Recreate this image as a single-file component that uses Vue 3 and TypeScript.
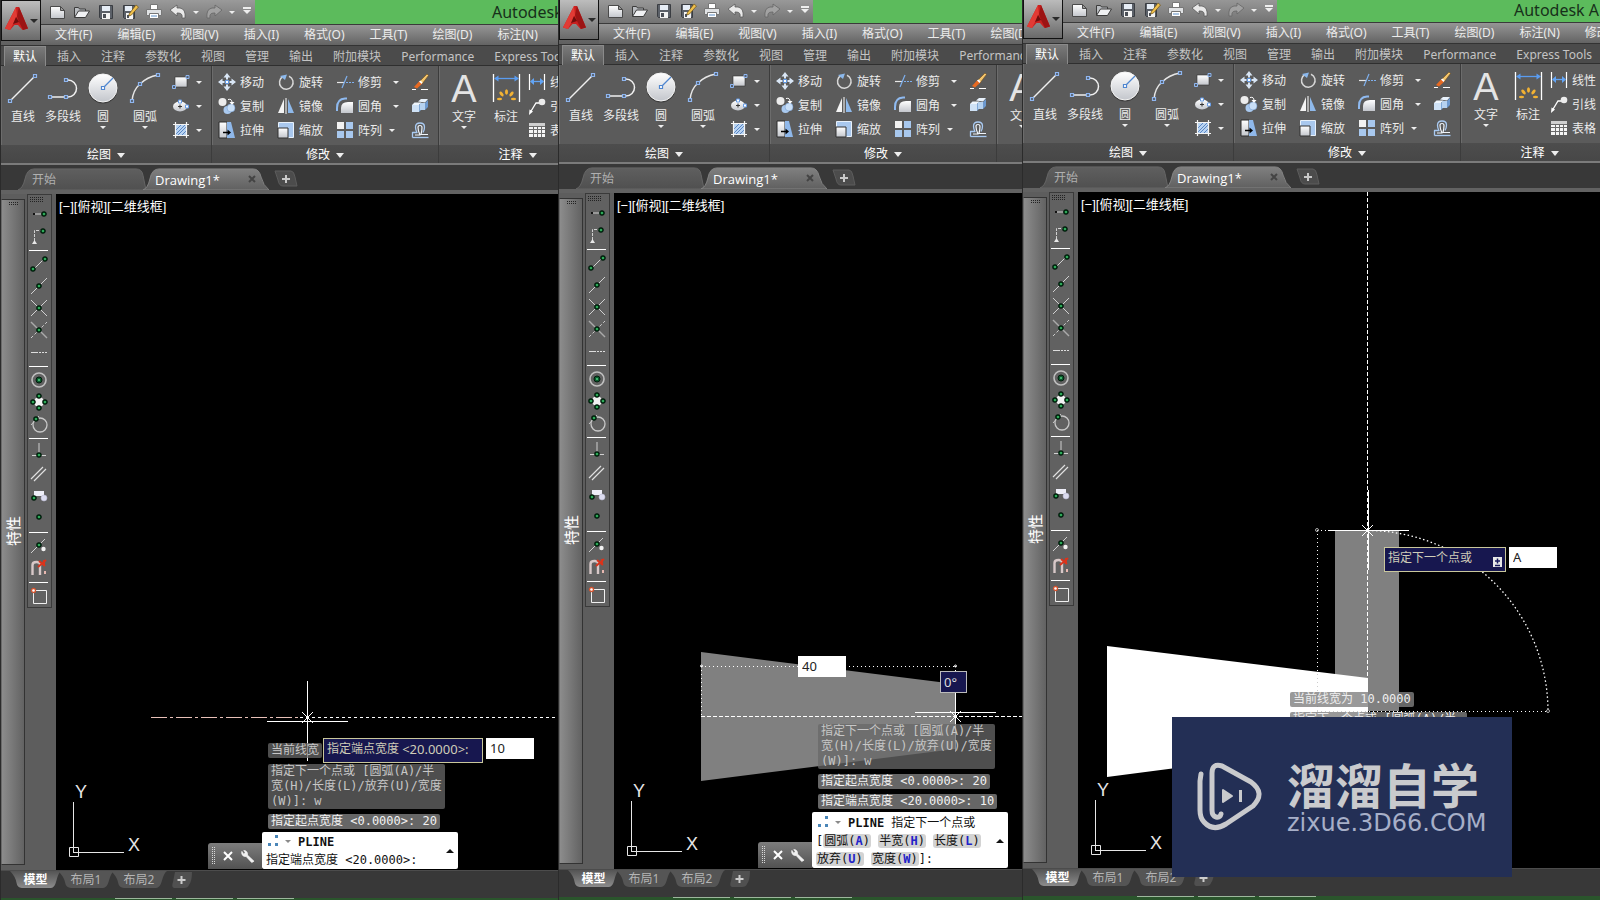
<script setup lang="ts">
interface Pane { id: string; grow: string }
interface BigTool { icon: string; label: string; caret: boolean; cls: string }
interface SmallTool { icon: string; label: string; caret: boolean }

const panes: Pane[] = [
  { id: 'one', grow: 'first' },
  { id: 'two', grow: 'second' },
  { id: 'three', grow: 'third' },
]

const quickIcons = ['new', 'open', 'save', 'saveas', 'print', 'undo']
const menus = ['文件(F)', '编辑(E)', '视图(V)', '插入(I)', '格式(O)', '工具(T)', '绘图(D)', '标注(N)', '修改']
const ribbonTabs = ['默认', '插入', '注释', '参数化', '视图', '管理', '输出', '附加模块', 'Performance', 'Express Tools']

const drawTools: BigTool[] = [
  { icon: 'line', label: '直线', caret: false, cls: '' },
  { icon: 'pline', label: '多段线', caret: false, cls: '' },
  { icon: 'circle', label: '圆', caret: true, cls: '' },
  { icon: 'arc', label: '圆弧', caret: true, cls: 'wide' },
]
const shapeTools: string[] = ['rect', 'ellipse', 'hatch']
const shapeNames: string[] = ['矩形', '椭圆', '图案填充']

const modifyTools: SmallTool[] = [
  { icon: 'move', label: '移动', caret: false },
  { icon: 'rotate', label: '旋转', caret: false },
  { icon: 'trim', label: '修剪', caret: true },
  { icon: 'erase', label: '', caret: false },
  { icon: 'copy', label: '复制', caret: false },
  { icon: 'mirror', label: '镜像', caret: false },
  { icon: 'fillet', label: '圆角', caret: true },
  { icon: 'explode', label: '', caret: false },
  { icon: 'stretch', label: '拉伸', caret: false },
  { icon: 'scale', label: '缩放', caret: false },
  { icon: 'array', label: '阵列', caret: true },
  { icon: 'offset', label: '', caret: false },
]
const noteTools: SmallTool[] = [
  { icon: 'linear', label: '线性', caret: false },
  { icon: 'leader', label: '引线', caret: false },
  { icon: 'table', label: '表格', caret: false },
]

const snapGroups: string[][] = [
  ['track', 'from'],
  ['end', 'mid', 'int', 'appint', 'ext'],
  ['cen', 'qua', 'tan'],
  ['per', 'par', 'ins', 'node'],
  ['near', 'none'],
  ['settings'],
]

const layoutTabs = ['模型', '布局1', '布局2']
const optionLines = '指定下一个点或 [圆弧(A)/半\n宽(H)/长度(L)/放弃(U)/宽度\n(W)]: w'
</script>

<template>
  <main class="desk">
    <svg class="defs" aria-hidden="true">
      <defs>
        <linearGradient id="gl" x1="0" y1="0" x2="0" y2="1"><stop offset="0" stop-color="#fff" /><stop offset="1" stop-color="#c3c6cc" /></linearGradient>
        <linearGradient id="gtab" x1="0" y1="0" x2="0" y2="1"><stop offset="0" stop-color="#808080" /><stop offset="1" stop-color="#606060" /></linearGradient>
        <linearGradient id="gtab2" x1="0" y1="0" x2="0" y2="1"><stop offset="0" stop-color="#5f5f5f" /><stop offset="1" stop-color="#505050" /></linearGradient>
        <linearGradient id="gbot" x1="0" y1="0" x2="0" y2="1"><stop offset="0" stop-color="#545454" /><stop offset="1" stop-color="#8c8c8c" /></linearGradient>
      </defs>

      <symbol id="i-app" viewBox="0 0 24 24">
        <path d="M12 1 1 22.500 6 24 10.500 19H14l4.500 5 5.500-1.500L15 1z" fill="#c9201f" />
        <path d="M12 1 1 22.500 6 24 13 10z" fill="#e23b35" />
        <path d="M15 1 13 10l2 6 4 8 5-1.500z" fill="#9c1414" />
        <path d="M9 18 12 11l3 5z" fill="#6f0d0d" />
      </symbol>
      <symbol id="i-new" viewBox="0 0 18 18"><path d="M1.500 3.500h10l4 4v8h-14z" fill="url(#gl)" stroke="#4a4a4a" /><path d="M11.500 3.500v4h4z" fill="#9a9a9a" stroke="#4a4a4a" /></symbol>
      <symbol id="i-open" viewBox="0 0 18 18"><path d="M1.500 14.500V4.500h4l1 1.500h6v2" fill="#b9bcc0" stroke="#3c3c3c" /><path d="M1.500 14.500 5.500 8h11l-4 6.500z" fill="#f0f1f3" stroke="#3c3c3c" /></symbol>
      <symbol id="i-save" viewBox="0 0 18 18"><path d="M2.500 2.500h13v13h-12l-1-1z" fill="#5b6068" stroke="#3a3d42" /><rect x="5" y="3" width="8" height="5" fill="#e6edf6" /><rect x="5" y="10" width="8" height="6" fill="#f4f4f4" /><rect x="6" y="11" width="3" height="4" fill="#4c5057" /></symbol>
      <symbol id="i-saveas" viewBox="0 0 18 18"><path d="M2.500 2.500h11v13h-10l-1-1z" fill="#5b6068" stroke="#3a3d42" /><rect x="4" y="3" width="7" height="5" fill="#e6edf6" /><rect x="5" y="10" width="7" height="6" fill="#f4f4f4" /><rect x="6" y="12" width="2" height="3" fill="#4c5057" /><path d="M8 11 15 2l2.500 2L10.500 12 8 13z" fill="#f0c04c" stroke="#6e5319" stroke-width=".7" /></symbol>
      <symbol id="i-print" viewBox="0 0 18 18"><path d="M5.500 7V1.500h7V7" fill="#fff" stroke="#777" /><path d="M1.500 6.500h15v6h-15z" fill="#e0e2e4" stroke="#777" /><path d="M4.500 10.500h9v5h-9z" fill="#fff" stroke="#777" /><path d="M6 13h6" stroke="#5a8cc4" /></symbol>
      <symbol id="i-undo" viewBox="0 0 18 18"><path d="M1 7 8 2v3h3q6 1 5 10h-3q1-5-4-5H8v3z" fill="#e9e9e9" stroke="#5a5a5a" stroke-width=".8" /></symbol>
      <symbol id="i-redo" viewBox="0 0 18 18"><path d="M17 7 10 2v3H7q-6 1-5 10h3q-1-5 4-5h1v3z" fill="#a2a2a2" stroke="#666" stroke-width=".8" /></symbol>

      <symbol id="i-line" viewBox="0 0 32 32"><path d="M3 29 28 4" stroke="#f0f0f0" stroke-width="1.500" /><g fill="#55606e" stroke="#8fb6f0" stroke-width="1.200"><path d="M1.500 27.500h3v3h-3zM26.500 2.500h3v3h-3z" /></g></symbol>
      <symbol id="i-pline" viewBox="0 0 32 32"><path d="M3 25h18a8.500 8.500 0 0 0 0-17h-2" fill="none" stroke="#f0f0f0" stroke-width="1.500" /><g fill="#55606e" stroke="#8fb6f0" stroke-width="1.200"><path d="M1.500 23.500h3v3h-3zM17.500 23.500h3v3h-3zM17.500 6.500h3v3h-3z" /></g></symbol>
      <symbol id="i-circle" viewBox="0 0 32 32"><circle cx="16" cy="17" r="14.500" fill="#3d3d3d" /><circle cx="16" cy="16" r="14" fill="url(#gl)" stroke="#f5f5f5" /><path d="M17 15 26 6" stroke="#4f86d0" stroke-width="1.300" /><path d="M14.500 14.500h3v3h-3z" fill="#fff" stroke="#4f86d0" stroke-width="1.200" /></symbol>
      <symbol id="i-arc" viewBox="0 0 32 32"><path d="M3 29Q4 18 11 12 18 5 29 3" fill="none" stroke="#e6e6e6" stroke-width="1.500" /><g fill="#55606e" stroke="#8fb6f0" stroke-width="1.200"><path d="M1.500 27.500h3v3h-3zM9.500 10.500h3v3h-3zM27.500 1.500h3v3h-3z" /></g></symbol>
      <symbol id="i-dim" viewBox="0 0 32 32"><path d="M3.500 2v28M29.500 2v28" stroke="#fff" stroke-width="1.300" /><path d="M6 6.500h21" stroke="#5a9cf0" stroke-width="1.300" /><path d="M4 6.500 8.500 3.500v6zM29 6.500 24.500 3.500v6z" fill="#5a9cf0" /><g fill="#f2b233"><ellipse cx="16.500" cy="20" rx="1.500" ry="2.800" /><ellipse cx="11.500" cy="22" rx="1.500" ry="2.800" transform="rotate(-40 11.500 22)" /><ellipse cx="21.500" cy="22" rx="1.500" ry="2.800" transform="rotate(40 21.500 22)" /><ellipse cx="9.500" cy="27" rx="2.600" ry="1.300" /><ellipse cx="23.500" cy="27" rx="2.600" ry="1.300" /></g></symbol>

      <symbol id="i-rect" viewBox="0 0 18 18"><rect x="3" y="4" width="12" height="10" fill="url(#gl)" stroke="#333" stroke-width=".6" /><g fill="#55606e" stroke="#8fb6f0"><path d="M.500 12.500h3v3h-3zM14 2.500h3v3h-3z" /></g></symbol>
      <symbol id="i-ellipse" viewBox="0 0 18 18"><ellipse cx="8" cy="9.500" rx="7" ry="5" fill="url(#gl)" /><path d="M8 7.500v4M6 9.500h4" stroke="#333" /><path d="M6.500 3h3v3h-3zM13.500 8h3v3h-3z" fill="#fff" stroke="#6a9ee6" /></symbol>
      <symbol id="i-hatch" viewBox="0 0 18 18"><rect x="4" y="4" width="10" height="10" fill="#b9d4f2" /><path d="M4 9 9 4M4 13 13 4M6 14 14 6M10 14l4-4" stroke="#5a86c4" /><path d="M1 3.500h16M3.500 1v16M14.500 1v16M1 14.500h16" stroke="#f4f4f4" stroke-width="1.200" /></symbol>
      <symbol id="i-move" viewBox="0 0 18 18"><g fill="#d9e6f5"><path d="M9 0 12.500 4.500H10v2H8v-2H5.500zM9 18l3.500-4.500H10v-2H8v2H5.500zM0 9 4.500 5.500V8h2v2h-2v2.500zM18 9l-4.500-3.500V8h-2v2h2v2.500z" /></g><path d="M7.500 7.500h3v3h-3z" fill="#fff" stroke="#5f98e4" /></symbol>
      <symbol id="i-rotate" viewBox="0 0 18 18"><path d="M6 3.500A6.800 6.800 0 1 0 12 3.200" fill="none" stroke="#d7d7d7" stroke-width="1.500" /><path d="M3 3 10 1.500 8 7z" fill="#8bb8ec" /></symbol>
      <symbol id="i-trim" viewBox="0 0 18 18"><path d="M1 9.500h7" stroke="#e8e8e8" stroke-width="1.200" /><path d="M10 9.500h8" stroke="#7fb0ee" stroke-width="1.200" stroke-dasharray="2 1" /><path d="M6 15 11 3" stroke="#7fb0ee" stroke-width="1.200" /></symbol>
      <symbol id="i-erase" viewBox="0 0 18 18"><path d="M1 16.500h4M10 16.500h7" stroke="#fff" /><path d="M9 8 16 1l1.500 1.500L11 11z" fill="#f3c56d" stroke="#704b18" stroke-width=".6" /><path d="M3 14 8.500 8l3 2.500L6 15.500z" fill="#e86a22" /><path d="M8 8.500l1.500-1 2 2-1 1.500z" fill="#fff" /></symbol>
      <symbol id="i-copy" viewBox="0 0 18 18"><circle cx="4.500" cy="5" r="4" fill="#ececec" /><circle cx="9.500" cy="13" r="4" fill="#a9c9ef" /><circle cx="13" cy="11" r="4" fill="#c9dff7" stroke="#6a94cc" stroke-width=".5" /><path d="M10 2.500q4-1 4 3" fill="none" stroke="#fff" /><path d="M11.500 5h5l-2.500 3z" fill="#fff" /></symbol>
      <symbol id="i-mirror" viewBox="0 0 18 18"><path d="M7 2v14H1z" fill="#f4f4f4" /><path d="M11 2v14h6z" fill="#8fb9ea" /><path d="M9 1v16" stroke="#fff" /></symbol>
      <symbol id="i-fillet" viewBox="0 0 18 18"><path d="M5 16V11q0-6 7-6h5v11z" fill="url(#gl)" /><path d="M1 14V11Q1 2 9 1.500h2" fill="none" stroke="#8fbaf0" stroke-width="2" /></symbol>
      <symbol id="i-explode" viewBox="0 0 18 18"><path d="M1 8h7v7H1z" fill="#cfe2f6" /><path d="M1 8 3.500 5.500h7L8 8z" fill="#eef5fc" /><path d="M8 8l2.500-2.500v7L8 15z" fill="#7fa8d8" /><path d="M9 6h5v7H9z" fill="#b6d2f0" /><path d="M7 4.500 10 2h7l-3 3.500z" fill="#e9f2fc" /><path d="M14 6 17 3v7l-3 3z" fill="#6d99cf" /></symbol>
      <symbol id="i-stretch" viewBox="0 0 18 18"><path d="M1 1h8v16H1z" fill="url(#gl)" stroke="#2d2d2d" /><path d="M9 1h4l4 16H9z" fill="#8fb8ea" /><path d="M5 11.500h6" stroke="#000" stroke-width="1.500" /><path d="M9.500 8.500 13 11.500l-3.500 3z" fill="#000" /></symbol>
      <symbol id="i-scale" viewBox="0 0 18 18"><path d="M1.500 1.500h15v15h-15z" fill="#a9c8ee" stroke="#e8f1fb" /><path d="M1 7h10v10H1z" fill="url(#gl)" stroke="#333" /></symbol>
      <symbol id="i-array" viewBox="0 0 18 18"><rect x="1" y="1" width="7" height="7" fill="#f2f2f2" /><rect x="10" y="1" width="7" height="7" fill="#a8c8ee" /><rect x="1" y="10" width="7" height="7" fill="#a8c8ee" /><rect x="10" y="10" width="7" height="7" fill="#a8c8ee" /></symbol>
      <symbol id="i-offset" viewBox="0 0 18 18"><g fill="none" stroke-linejoin="round"><path d="M1.500 16.500V11.500H6Q4.500 9 4.500 6q0-4 4.500-4t4.500 4q0 3-1.500 5.500" stroke="#a9caf2" stroke-width="1.300" /><path d="M1.500 16.500h16" stroke="#a9caf2" stroke-width="1.300" /><path d="M4 14H9Q7 10 7 6.500 7 4.500 9 4.500t2 2q0 3-1 7h7" stroke="#f0f5fb" stroke-width="1.200" /></g></symbol>
      <symbol id="i-linear" viewBox="0 0 18 18"><path d="M1.500 1v16M16.500 1v16" stroke="#fff" stroke-width="1.200" /><path d="M4 8.500h10" stroke="#62a4f4" stroke-width="1.300" /><path d="M2 8.500 6 5v7zM16 8.500 12 5v7z" fill="#62a4f4" /></symbol>
      <symbol id="i-leader" viewBox="0 0 18 18"><circle cx="14" cy="5" r="3.300" fill="#ececec" /><path d="M11 6H8L2.500 15" fill="none" stroke="#fff" stroke-width="1.300" /><path d="M1 18 1.500 12.500 5 14.500z" fill="#fff" /></symbol>
      <symbol id="i-table" viewBox="0 0 18 18"><rect x="1" y="2" width="16" height="14" fill="#f5f5f5" /><rect x="1" y="2" width="16" height="3" fill="#cfcfcf" /><path d="M1 8.500h16M1 12.500h16M5.500 5v11M9.500 5v11M13.500 5v11M1 5.500h16" stroke="#6c6c6c" /></symbol>

      <symbol id="pt" viewBox="0 0 6 6"><circle cx="3" cy="3" r="2.200" fill="#062" stroke="#021a0c" stroke-width="1.200" /><circle cx="3" cy="3" r="1" fill="#3fbf6c" /></symbol>
      <symbol id="s-track" viewBox="0 0 18 18"><path d="M5 9h6" stroke="#d0d0d0" /><rect x="3" y="8" width="2" height="2" fill="#111" /><use href="#pt" x="11" y="6" width="6" height="6" /></symbol>
      <symbol id="s-from" viewBox="0 0 18 18"><path d="M4.500 14V3.500H11" fill="none" stroke="#d0d0d0" stroke-dasharray="3 1" /><path d="M2 17h5l-2.500-4z" fill="#e8e8e8" /><use href="#pt" x="10" y="1" width="6" height="6" /></symbol>
      <symbol id="s-end" viewBox="0 0 18 18"><path d="M3 15 15 3" stroke="#d0d0d0" /><use href="#pt" x="0" y="11" width="6" height="6" /><use href="#pt" x="12" y="1" width="6" height="6" /></symbol>
      <symbol id="s-mid" viewBox="0 0 18 18"><path d="M1 17 17 1" stroke="#d0d0d0" /><use href="#pt" x="6" y="6" width="6" height="6" /></symbol>
      <symbol id="s-int" viewBox="0 0 18 18"><path d="M1 17 17 1M1 1l16 16" stroke="#d0d0d0" /><use href="#pt" x="6" y="6" width="6" height="6" /></symbol>
      <symbol id="s-appint" viewBox="0 0 18 18"><path d="M1 1l16 16" stroke="#aaa" stroke-width="1.500" /><path d="M1 17 17 1" stroke="#ccc" stroke-dasharray="3 2" /><use href="#pt" x="6" y="6" width="6" height="6" /></symbol>
      <symbol id="s-ext" viewBox="0 0 18 18"><path d="M1 9.500h7" stroke="#ddd" /><path d="M9 9.500h9" stroke="#ddd" stroke-dasharray="2 1" /></symbol>
      <symbol id="s-cen" viewBox="0 0 18 18"><circle cx="9" cy="9" r="7" fill="none" stroke="#c0c0c0" stroke-width="1.600" /><circle cx="9" cy="9" r="3" fill="#0a5a2c" stroke="#021a0c" /><circle cx="9" cy="9" r="1" fill="#4fd080" /></symbol>
      <symbol id="s-qua" viewBox="0 0 18 18"><circle cx="9" cy="9" r="5" fill="#f2f2f2" /><use href="#pt" x="6" y="0" width="6" height="6" /><use href="#pt" x="6" y="12" width="6" height="6" /><use href="#pt" x="0" y="6" width="6" height="6" /><use href="#pt" x="12" y="6" width="6" height="6" /></symbol>
      <symbol id="s-tan" viewBox="0 0 18 18"><circle cx="10" cy="10" r="7" fill="none" stroke="#c8c8c8" stroke-width="1.300" /><path d="M1 10 9 1" stroke="#c8c8c8" /><use href="#pt" x="3" y="1" width="6" height="6" /></symbol>
      <symbol id="s-per" viewBox="0 0 18 18"><path d="M9 0v12M2 12.500h14" stroke="#d0d0d0" /><use href="#pt" x="6" y="9" width="6" height="6" /></symbol>
      <symbol id="s-par" viewBox="0 0 18 18"><path d="M1 14 13 2M4 16 16 4" stroke="#e0e0e0" stroke-width="1.200" /></symbol>
      <symbol id="s-ins" viewBox="0 0 18 18"><path d="M4 4h10v5H4z" fill="#eeeef8" /><circle cx="14" cy="11" r="3" fill="#dcdcf0" stroke="#b8b8d0" stroke-width=".6" /><use href="#pt" x="1" y="8" width="6" height="6" /></symbol>
      <symbol id="s-node" viewBox="0 0 18 18"><use href="#pt" x="6" y="5" width="6" height="6" /></symbol>
      <symbol id="s-near" viewBox="0 0 18 18"><path d="M1 16 15 2" stroke="#d0d0d0" /><use href="#pt" x="6" y="5" width="6" height="6" /><circle cx="13.500" cy="12" r="2.200" fill="#f2f2f2" /></symbol>
      <symbol id="s-none" viewBox="0 0 18 18"><path d="M2.500 16V6q0-3 4-3t3.500 3v10" fill="none" stroke="#d8c8c8" stroke-width="2.400" /><path d="M9 2l6 5M16 1 8 8M14 1v6" stroke="#d8341c" stroke-width="2" /><rect x="14" y="12" width="2" height="3" fill="#e8b8b0" /></symbol>
      <symbol id="s-settings" viewBox="0 0 18 18"><path d="M3.500 4v12.500h13v-13H5" fill="none" stroke="#f0f0f0" /><circle cx="3.500" cy="3.500" r="2" fill="#fff" stroke="#d4512c" stroke-width="1.300" /></symbol>
      <symbol id="i-wrench" viewBox="0 0 16 16"><path d="M2 2.500A4 4 0 0 0 6.500 8L12.500 14.500 15 13 8 6.500A4 4 0 0 0 4 1.500L5.500 4 4 5.500z" fill="#f0f0f0" stroke="#fff" stroke-width=".6" /></symbol>
    </svg>

    <section v-for="p in panes" :key="p.id" class="win" :class="p.grow">
      <header class="head">
        <button class="app" aria-label="应用程序菜单"><svg width="24" height="26"><use href="#i-app" /></svg><i class="caret dark"></i></button>
        <div class="bars">
          <div class="title">
            <div class="quick">
              <button v-for="q in quickIcons" :key="q" class="q" :aria-label="q"><svg width="18" height="18"><use :href="'#i-' + q" /></svg></button>
              <i class="caret q-caret"></i>
              <button class="q" aria-label="redo"><svg width="18" height="18"><use href="#i-redo" /></svg></button>
              <i class="caret q-caret"></i>
              <i class="caret over"></i>
            </div>
            <span class="name">Autodesk A</span>
          </div>
          <nav class="menu"><button v-for="m in menus" :key="m">{{ m }}</button></nav>
        </div>
      </header>

      <nav class="rtabs">
        <button v-for="(t, i) in ribbonTabs" :key="t" :class="{ on: i === 0 }">{{ t }}</button>
      </nav>

      <div class="ribbon">
        <div class="group draw">
          <div class="tools">
            <button v-for="t in drawTools" :key="t.icon" class="big" :class="t.cls">
              <svg width="32" height="32"><use :href="'#i-' + t.icon" /></svg><span>{{ t.label }}</span><i v-if="t.caret" class="caret"></i>
            </button>
            <div class="shapes">
              <button v-for="(s, i) in shapeTools" :key="s" class="small" :aria-label="shapeNames[i]"><svg width="18" height="18"><use :href="'#i-' + s" /></svg><i class="caret"></i></button>
            </div>
          </div>
          <button class="gname">绘图<i class="caret large"></i></button>
        </div>
        <div class="group modify">
          <div class="tools grid">
            <button v-for="t in modifyTools" :key="t.icon" class="small" :class="t.icon" :aria-label="t.label || t.icon"><svg width="18" height="18"><use :href="'#i-' + t.icon" /></svg><span v-if="t.label">{{ t.label }}</span><i v-if="t.caret" class="caret"></i></button>
          </div>
          <button class="gname">修改<i class="caret large"></i></button>
        </div>
        <div class="group note">
          <div class="tools">
            <button class="big"><b class="letter">A</b><span>文字</span><i class="caret"></i></button>
            <button class="big wide"><svg width="32" height="32"><use href="#i-dim" /></svg><span>标注</span></button>
            <div class="shapes">
              <button v-for="t in noteTools" :key="t.icon" class="small"><svg width="18" height="18"><use :href="'#i-' + t.icon" /></svg><span>{{ t.label }}</span></button>
            </div>
          </div>
          <button class="gname">注释<i class="caret large"></i></button>
        </div>
      </div>

      <nav class="files">
        <button class="file idle"><svg class="shape" viewBox="0 0 128 24" preserveAspectRatio="none"><path d="M0 24Q5 22 7 12 9 1 16 1H118q6 0 7 7l3 16z" fill="url(#gtab2)" stroke="#666" /></svg><span>开始</span></button>
        <button class="file live"><svg class="shape" viewBox="0 0 128 24" preserveAspectRatio="none"><path d="M0 24Q5 22 7 12 9 1 16 1H112q6 0 8 9t8 14z" fill="url(#gtab)" stroke="#858585" /></svg><span>Drawing1*</span><svg class="x" width="8" height="8" viewBox="0 0 8 8"><path d="M1 1l6 6M7 1 1 7" stroke="#444" stroke-width="2" /></svg></button>
        <button class="file add" aria-label="新图形"><svg width="24" height="18" viewBox="0 0 24 18"><path d="M1 1h16q3 0 4 6l2 9H9Q5 16 4 10z" fill="#4c4c4c" stroke="#5c5c5c" /><path d="M12 5v8M8 9h8" stroke="#c8c8c8" stroke-width="2" /></svg></button>
      </nav>

      <div class="work">
        <aside class="palette"><i class="grip"></i><span>特性</span></aside>
        <div class="dock">
          <div class="snaps">
            <i class="grip wide"></i>
            <template v-for="(g, gi) in snapGroups" :key="gi">
              <hr v-if="gi > 0" />
              <button v-for="s in g" :key="s" :aria-label="s"><svg width="18" height="18"><use :href="'#s-' + s" /></svg></button>
            </template>
          </div>
        </div>

        <div class="canvas">
          <span class="view">[−][俯视][二维线框]</span>

          <svg v-if="p.id === 'one'" class="art">
            <g transform="translate(-56 -194)" fill="none" stroke="#fff">
              <path d="M151 717.500H300" stroke="#e8c0b8" stroke-dasharray="16 3 3 3" />
              <path d="M300 717.500H3000" stroke-dasharray="3 3" />
              <path d="M307.500 681v80M267 721.500h81M302 712l11 11M313 712l-11 11" />
            </g>
          </svg>
          <svg v-else-if="p.id === 'two'" class="art">
            <g transform="translate(-614 -193)" fill="none" stroke="#fff">
              <path d="M701 652 955 684V749L701 781z" fill="#808080" stroke="none" />
              <path d="M701 666.500h254.500M701.500 666v50M955.500 666v50" stroke-dasharray="1 3" />
              <path d="M701 716.500H3000" stroke-dasharray="4 2" />
              <path d="M955.500 680v72M915 712.500h81M950 711l11 11M961 711l-11 11" />
              <circle cx="701.500" cy="666" r="1" /><circle cx="955.500" cy="666" r="1" />
            </g>
          </svg>
          <svg v-else class="art">
            <g transform="translate(-1078 -192)" fill="none" stroke="#fff">
              <path d="M1335 530h64v181h-64z" fill="#808080" stroke="none" />
              <path d="M1107 646l261 32v65L1107 777z" fill="#fff" stroke="none" />
              <path d="M1317.500 530v181M1317 530.500h12M1317 711.500h231" stroke-dasharray="1 3" />
              <path d="M1368 530.500A181 181 0 0 1 1548 711" stroke-width="1.300" stroke-dasharray="1.500 2.500" />
              <path d="M1317.500 674v37M1317 711.500h50" stroke="#ccc" stroke-dasharray="1 3" />
              <path d="M1367.500 192V678" stroke-dasharray="4 2" />
              <path d="M1368.500 490v80M1328 530.500h81M1362 525l11 11M1373 525l-11 11" />
              <circle cx="1317" cy="530" r="1.500" stroke="#aaa" /><circle cx="1548" cy="711" r="1.500" stroke="#aaa" />
            </g>
          </svg>

          <svg class="ucs" width="84" height="78" viewBox="0 0 84 78">
            <path d="M17.500 21v50M17 71.500h51M13.500 66.500h9v9h-9z" fill="none" stroke="#e6e6e6" />
            <text x="19" y="17">Y</text><text x="72" y="70">X</text>
          </svg>

          <template v-if="p.id === 'one'">
            <p class="hist a1">当前线宽</p>
            <label class="prompt b1" for="w1">指定端点宽度 <span>&lt;20.0000&gt;:</span></label>
            <input id="w1" class="val c1" value="10" />
          </template>
          <template v-else-if="p.id === 'two'">
            <input class="val c2" value="40" aria-label="长度" />
            <output class="prompt b2">0°</output>
          </template>
          <template v-else>
            <label class="prompt b3" for="w3">指定下一个点或<svg width="9" height="10" viewBox="0 0 9 10"><rect width="9" height="10" fill="#e8e8e8" /><path d="M4.500 1.500v5M2 4h5M2 8.500h5" stroke="#171a5c" stroke-width="1.500" /></svg></label>
            <input id="w3" class="val c3" value="A" />
            <p class="hist light a3">当前线宽为 10.0000</p>
            <p class="hist light a4">{{ optionLines }}</p>
          </template>

          <div v-if="p.id !== 'three'" class="console">
            <div class="log">
              <p class="hist">{{ optionLines }}</p>
              <p class="hist bright">指定起点宽度 &lt;0.0000&gt;: 20</p>
              <p v-if="p.id === 'two'" class="hist bright">指定端点宽度 &lt;20.0000&gt;: 10</p>
            </div>
            <div class="cmd">
              <div class="handle">
                <i class="grip tall"></i>
                <button aria-label="关闭"><svg width="10" height="10" viewBox="0 0 10 10"><path d="M1 1l8 8M9 1 1 9" stroke="#fff" stroke-width="2" /></svg></button>
                <button aria-label="自定义"><svg width="15" height="15"><use href="#i-wrench" /></svg></button>
              </div>
              <div class="line">
                <div class="words">
                  <div><svg class="dots" width="12" height="12" viewBox="0 0 12 12"><path d="M0 9h3v3H0zM7 9h3v3H7zM7 1h3v3H7z" fill="#4a86b8" /></svg><i class="caret grey"></i><b>PLINE</b><template v-if="p.id === 'two'"> 指定下一个点或</template></div>
                  <div v-if="p.id === 'one'">指定端点宽度 &lt;20.0000&gt;:</div>
                  <template v-else>
                    <div>[<a href="#">圆弧(<em>A</em>)</a> <a href="#">半宽(<em>H</em>)</a> <a href="#">长度(<em>L</em>)</a></div>
                    <div><a href="#">放弃(<em>U</em>)</a> <a href="#">宽度(<em>W</em>)</a>]:</div>
                  </template>
                </div>
                <i class="up"></i>
              </div>
            </div>
          </div>
        </div>
      </div>

      <nav class="layouts">
        <button v-for="(l, i) in layoutTabs" :key="l" :class="{ on: i === 0 }"><svg class="shape" viewBox="0 0 56 19" preserveAspectRatio="none"><path d="M0 0h56q-3 2-5 10t-6 8H13q-5 0-6-6T0 0z" :fill="i === 0 ? 'url(#gbot)' : '#555'" /></svg><span>{{ l }}</span></button>
        <button class="more" aria-label="新布局"><svg width="26" height="18" viewBox="0 0 26 18"><path d="M6 1h17q0 9-3 13-1 3-5 3H5q-3-1-1-6z" fill="#505050" /><path d="M12.500 5v8M8.500 9h8" stroke="#ccc" stroke-width="2" /></svg></button>
      </nav>
      <div class="strip"><i></i><i></i><i></i></div>

      <div v-if="p.id === 'three'" class="brand">
        <svg width="66" height="70" viewBox="0 0 66 70" fill="none" stroke="#c9cacd" stroke-width="5" stroke-linecap="round" stroke-linejoin="round">
          <path d="M24 52Q23 56 19 55 15 54 15 48V11Q15 1 25 4L54 20Q69 31 56 44L29 62Q16 70 7 60 3 56 3 48V19L4 12" />
          <path d="M26 28v12l9-6z" fill="#c9cacd" stroke-width="2" /><path d="M43.500 28v12" stroke-width="3" stroke-linecap="butt" />
        </svg>
        <div class="words2">
          <strong>溜溜自学</strong>
          <span>zixue.3D66.COM</span>
        </div>
      </div>
    </section>
  </main>
</template>

<style>
html, body { margin: 0; background: #000; }
</style>

<style scoped>
* { box-sizing: border-box; }
button { border: 0; padding: 0; background: none; color: inherit; font: inherit; white-space: nowrap; }
button, svg, i { flex: none; }
p { margin: 0; }
.defs { position: absolute; width: 0; height: 0; }
.desk {
  display: grid; grid-template-columns: 558fr 464fr 578fr; height: 100vh; overflow: hidden;
  font: 12px/18px "Noto Sans", "Noto Sans CJK SC", sans-serif; color: #ececec; background: #383838;
}
.win { position: relative; min-width: 0; display: flex; flex-direction: column; overflow: hidden; border-left: 1px solid #2b2b2b; background: #383838; --strip: 2px; }
.second { margin-top: -1px; --strip: 3px; }
.third { margin-top: -2px; --strip: 4px; }

.caret { display: inline-block; width: 0; height: 0; border: 3px solid transparent; border-top-color: #eee; border-bottom: 0; }
.caret.dark { border-width: 4px; border-bottom: 0; border-top-color: #2a2a2a; }
.caret.large { border-width: 4px; border-top-width: 5px; border-bottom: 0; }
.caret.grey { border-top-color: #8a8a8a; }

.head { display: flex; flex: none; height: 46px; background: linear-gradient(#8e8e8e, #606060); border-bottom: 1px solid #333; }
.app { display: flex; align-items: center; justify-content: center; gap: 2px; width: 40px; height: 41px; border: 1px solid #111; background: linear-gradient(#bdbdbd, #6a6a6a); }
.app svg { margin-top: -6px; }
.bars { flex: none; width: 600px; }
.title { display: flex; height: 25px; border-bottom: 1px solid #3a3a3a; background: #5cbb5c; }
.quick { display: flex; align-items: center; width: 214px; padding-left: 5px; background: linear-gradient(#9a9a9a, #737373); }
.q { display: flex; justify-content: center; width: 24px; }
.q-caret { margin: 0 3px; }
.over { margin-left: 5px; border-width: 4px; border-bottom: 0; position: relative; }
.over::before { content: ""; position: absolute; left: -4px; top: -7px; width: 8px; height: 2px; background: #eee; }
.name { padding-left: 237px; font-size: 16px; line-height: 25px; color: #17301a; white-space: nowrap; }
.menu { display: flex; align-items: flex-start; gap: 25px; height: 20px; padding-left: 14px; background: linear-gradient(#959595, #636363); line-height: 20px; }

.rtabs { display: flex; flex: none; height: 20px; padding-left: 3px; background: #4b4b4b; border-bottom: 1px solid #2f2f2f; color: #c4c4c4; }
.rtabs button { height: 20px; margin-right: 20px; line-height: 22px; }
.rtabs .on { padding: 0 8px; margin-right: 11px; color: #fff; background: linear-gradient(#7a7a7a, #5b5b5b); border: 1px solid #8a8a8a; border-bottom: 0; line-height: 20px; }

.ribbon { display: flex; flex: none; height: 99px; background: #5b5b5b; border-bottom: 2px solid #7b7b7b; }
.group { flex: none; display: flex; flex-direction: column; border-right: 1px solid #3c3c3c; box-shadow: inset 1px 0 #6c6c6c; }
.draw { width: 211px; }
.modify { width: 227px; }
.note { width: 158px; }
.tools { display: flex; height: 79px; padding-left: 2px; }
.note .tools { padding-left: 5px; }
.big { display: flex; flex-direction: column; align-items: center; width: 40px; padding-top: 6px; }
.big.wide { width: 44px; }
.big span { margin-top: 4px; height: 18px; }
.letter { height: 32px; font: 38px/35px "Liberation Sans", sans-serif; color: #e4e4e4; }
.shapes { padding: 4px 0 0 5px; }
.note .shapes { padding-left: 0; }
.small { display: flex; align-items: center; gap: 4px; height: 24px; line-height: 20px; }
.small span { padding-top: 1px; }
.shapes .caret { margin-left: 2px; }
.grid { display: grid; grid-template-columns: 59px 59px 75px 20px; align-content: start; padding: 4px 0 0 6px; }
.grid .caret { margin-left: 7px; }
.grid .array .caret { margin-left: 3px; }
.gname { display: flex; align-items: center; justify-content: center; gap: 6px; height: 18px; padding-top: 2px; background: linear-gradient(#4d4d4d, #474747); color: #fff; }

.files { display: flex; flex: none; height: 29px; padding: 3px 0 0 17px; background: #383838; border-bottom: 4px solid #626262; }
.file { position: relative; display: flex; align-items: center; width: 128px; height: 22px; color: #b0b0b0; }
.shape { position: absolute; left: 0; top: 0; width: 100%; height: 100%; }
.file span { position: relative; margin-left: 14px; padding-top: 1px; }
.live { width: 126px; margin-left: -3px; color: #fff; font-family: "Open Sans", "Noto Sans", sans-serif; font-size: 13px; }
.live span { margin-left: 12px; }
.file .x { position: absolute; right: 13px; top: 7px; }
.add { width: 24px; margin-left: 5px; }

.work { display: flex; flex: 1; min-height: 0; background: #5d5d5d; }
.palette { flex: none; display: flex; flex-direction: column; align-items: center; width: 24px; margin: 5px 0; border: 1px solid #333; border-left-color: #6a6a6a; background: linear-gradient(90deg, #8c8c8c, #626262); }
.palette span { margin: auto 0; padding: 6px 0 0; font-size: 15px; line-height: 18px; color: #fff; writing-mode: vertical-rl; text-orientation: sideways; transform: rotate(180deg); }
.grip { display: block; width: 10px; height: 3px; margin-top: 2px; background: conic-gradient(#222 25%, transparent 0) 0 0 / 2px 2px; }
.grip.wide { width: 14px; height: 5px; margin: 2px 6px 1px 0; }
.dock { flex: none; width: 31px; padding-left: 2px; }
.snaps { display: flex; flex-direction: column; align-items: center; width: 25px; padding-right: 2px; border: 1px solid #3a3a3a; background: #616161; }
.snaps button { display: flex; align-items: center; height: 22px; }
.snaps hr { width: 19px; height: 1px; margin: 3px 0 2px; border: 0; background: #fff; }

.canvas { position: relative; flex: 1; min-width: 0; overflow: hidden; background: #000; }
.view { position: absolute; left: 3px; top: 4px; color: #fff; font: 13px/18px "Liberation Sans", "Noto Sans CJK SC", sans-serif; white-space: nowrap; }
.art { position: absolute; left: 0; top: 0; width: 100%; height: 100%; }
.ucs { position: absolute; left: 0; bottom: 11px; overflow: visible; }
.ucs text { font: 18px "Liberation Sans", sans-serif; fill: #e6e6e6; }

.hist { width: max-content; padding: 0 3px; border-radius: 2px; background: rgba(104, 104, 104, .75); color: #c6c6c6; font: 12px/15px "DejaVu Sans Mono", "Noto Sans CJK SC", monospace; white-space: pre; }
.hist.bright { background: #666; color: #f2f2f2; }
.hist.light { background: rgba(128, 128, 128, .8); color: #eee; }
.a1, .a3, .a4 { position: absolute; }
.a1 { left: 212px; top: 549px; }
.a3 { left: 212px; top: 500px; }
.a4 { left: 212px; top: 520px; }
.prompt { position: absolute; display: flex; height: 25px; padding: 0 3px; border: 1px solid #c9c79c; background: #17174f; color: #cfcdb8; line-height: 20px; white-space: pre; }
.prompt span { font-size: 13px; }
.b1 { left: 267px; top: 544px; width: 160px; }
.b2 { left: 326px; top: 478px; width: 27px; height: 22px; border-color: #bbb; color: #ddd; font-size: 13px; }
.b3 { left: 306px; top: 355px; width: 122px; justify-content: space-between; }
.b3 svg { margin-top: 9px; }
.val { position: absolute; width: 48px; height: 21px; padding: 0 4px 1px; border: 0; background: #fff; color: #222; font: 13px "Noto Sans", sans-serif; }
.c1 { left: 430px; top: 544px; }
.c2 { left: 184px; top: 463px; }
.c3 { left: 431px; top: 355px; }

.console { position: absolute; left: 152px; bottom: 1px; }
.second .console { left: 144px; }
.log { display: flex; flex-direction: column; gap: 5px; margin: 0 0 3px 60px; }
.cmd { display: flex; align-items: flex-end; }
.handle { display: flex; align-items: center; gap: 7px; width: 54px; height: 26px; padding-left: 3px; border-radius: 3px 0 0 0; background: linear-gradient(#7d7d7d, #525252); }
.handle button { display: flex; }
.grip.tall { width: 5px; height: 18px; margin: 0; background: conic-gradient(#d8d8d8 25%, transparent 0) 0 0 / 2px 2px; }
.line { display: flex; align-items: center; width: 196px; padding: 1px 4px 0; border-radius: 2px; background: #fff; color: #111; font: 12px/18px "DejaVu Sans Mono", "Noto Sans CJK SC", monospace; }
.second .line { padding-top: 2px; }
.words { flex: 1; white-space: pre; }
.words > div { height: 18px; }
.dots { margin: 0 5px 0 2px; }
.words .caret { margin: 0 7px 3px 0; }
.words a { padding: 0 1px; border-radius: 3px; background: #d3d3d3; color: #111; text-decoration: none; }
.words em { color: #2222c8; font-style: normal; font-weight: bold; }
.up { width: 0; height: 0; border: 4px solid transparent; border-bottom-color: #111; border-top: 0; }

.layouts { display: flex; flex: none; height: 28px; padding-left: 9px; background: #383838; border-top: 1px solid #4c4c4c; }
.layouts button { position: relative; width: 56px; height: 18px; margin-right: -3px; color: #b4b4b4; }
.layouts .on { width: 51px; color: #fff; font-weight: bold; }
.layouts span { position: relative; }
.layouts .more { width: 26px; margin-left: 5px; }
.strip { display: flex; flex: none; align-items: flex-start; gap: 4px; height: var(--strip); padding-left: 114px; background: #2a552c; }
.strip i { width: 57px; height: 1px; background: #9cb89c; }

.brand { position: absolute; left: 149px; bottom: 23px; display: flex; align-items: center; gap: 24px; width: 340px; height: 160px; padding: 0 0 0 25px; background: #232f55; color: #c9cacd; }
.words2 { width: 205px; padding-bottom: 2px; }
.words2 strong { display: block; font: bold 48px/54px "Noto Sans CJK SC", sans-serif; white-space: nowrap; }
.words2 span { display: block; font: 24px/26px "DejaVu Sans", sans-serif; color: #a7afc8; white-space: nowrap; }
</style>
